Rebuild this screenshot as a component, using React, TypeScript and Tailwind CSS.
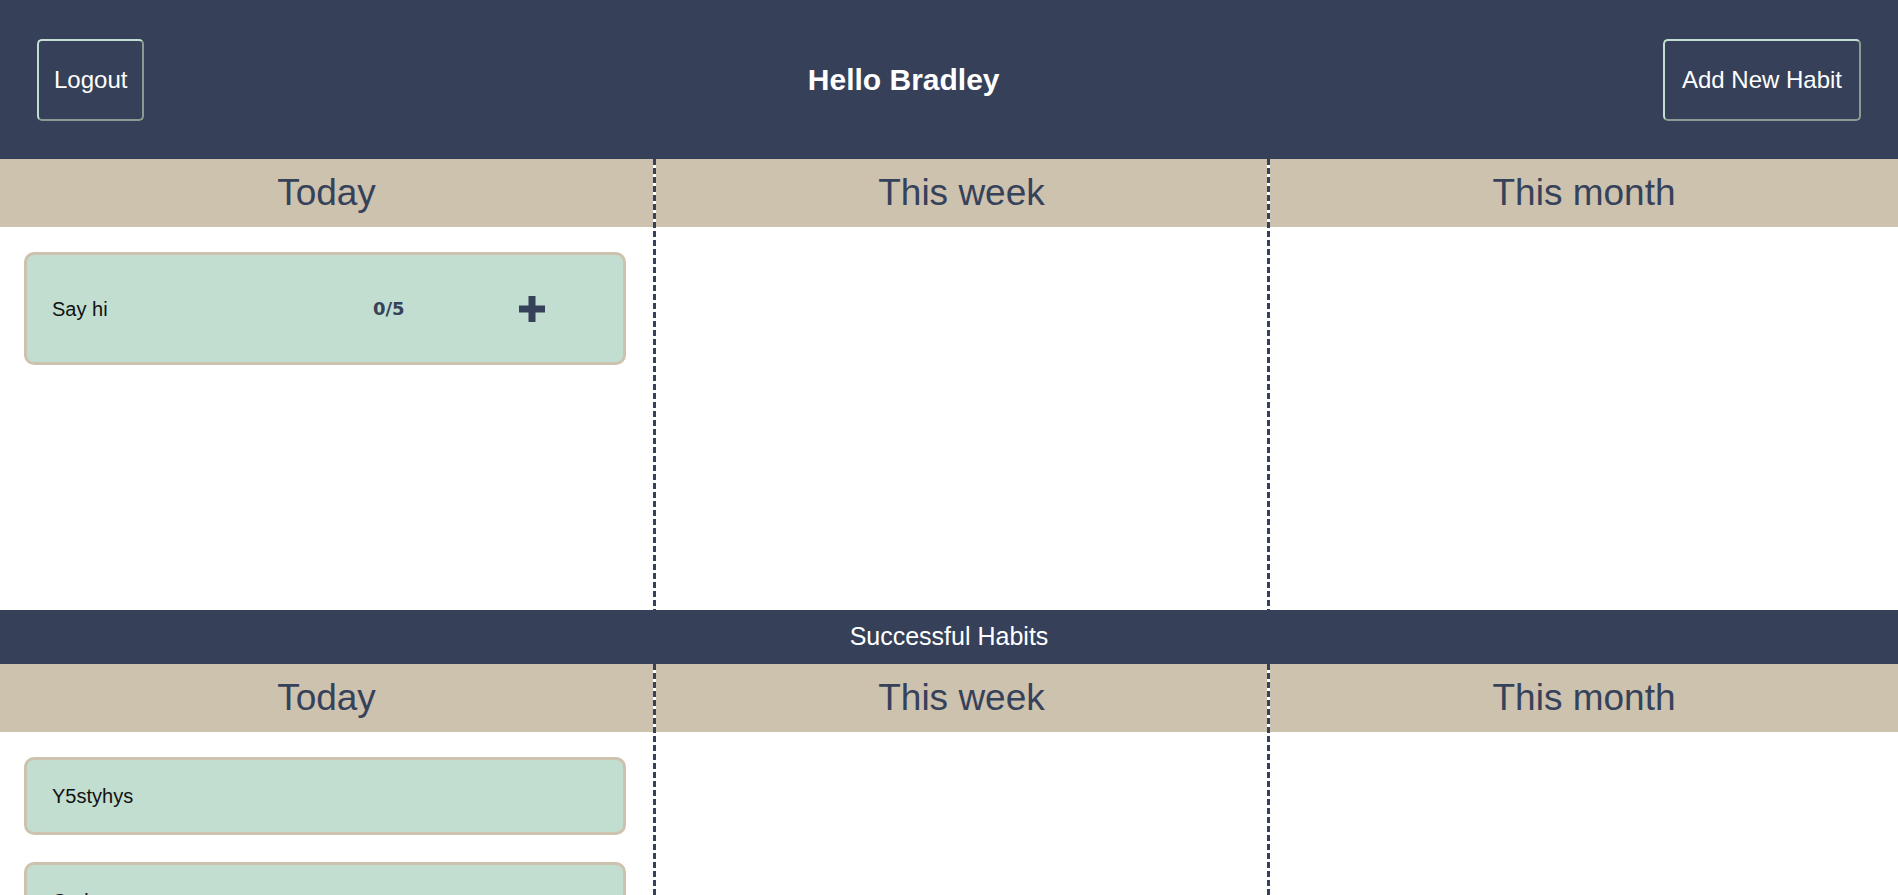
import React from 'react';

type Habit = { id: number; name: string; progress?: string };

const pending: Habit[] = [{ id: 1, name: 'Say hi', progress: '0/5' }];
const done: Habit[] = [
  { id: 2, name: 'Y5styhys' },
  { id: 3, name: 'Code' },
];

const periods = ['Today', 'This week', 'This month'];

function PlusIcon() {
  return (
    <svg width="26" height="26" viewBox="0 0 26 26" className="block">
      <rect x="0" y="9.5" width="26" height="7" fill="#36415a" />
      <rect x="9.5" y="0" width="7" height="26" fill="#36415a" />
    </svg>
  );
}

function HabitCard({ habit }: { habit: Habit }) {
  if (habit.progress) {
    return (
      <div className="h-[113px] flex items-center pl-[25px] bg-[#c2ded1] border-[3px] border-[#cdc2ae] rounded-[10px]">
        <span className="w-[321px] text-[20px] text-[#111]">{habit.name}</span>
        <span className="w-[32px] text-[18px] font-bold text-[#36415a] font-['DejaVu_Sans',sans-serif]">
          {habit.progress}
        </span>
        <button className="ml-[114px]">
          <PlusIcon />
        </button>
      </div>
    );
  }
  return (
    <div className="h-[78px] flex items-center pl-[25px] bg-[#c2ded1] border-[3px] border-[#cdc2ae] rounded-[10px]">
      <span className="text-[20px] text-[#111]">{habit.name}</span>
    </div>
  );
}

function Divider() {
  return (
    <div className="w-[3px] self-stretch bg-white bg-[repeating-linear-gradient(to_bottom,#36415a_0px,#36415a_6px,transparent_6px,transparent_9px)]" />
  );
}

function Band({ label }: { label: string }) {
  return (
    <div className="h-[68px] bg-[#cdc2ae] flex items-center justify-center text-[37px] text-[#36415a]">
      {label}
    </div>
  );
}

function Board({ habits }: { habits: Habit[] }) {
  return (
    <div className="flex">
      <div className="w-[653px] bg-white">
        <Band label={periods[0]} />
        <div className="min-h-[383px] pt-[25px] pl-[24px] pr-[27px] flex flex-col gap-[27px]">
          {habits.map((h) => (
            <HabitCard key={h.id} habit={h} />
          ))}
        </div>
      </div>
      <Divider />
      <div className="w-[611px] bg-white">
        <Band label={periods[1]} />
        <div className="min-h-[383px]" />
      </div>
      <Divider />
      <div className="flex-1 bg-white">
        <Band label={periods[2]} />
        <div className="min-h-[383px]" />
      </div>
    </div>
  );
}

export default function App() {
  return (
    <div className="h-[895px] overflow-hidden bg-white font-['Liberation_Sans',Arial,sans-serif]">
      {/* Header */}
      <header className="h-[159px] bg-[#364159] flex items-center justify-between px-[37px]">
        <button className="h-[82px] px-[15px] text-[24px] text-white border-2 border-t-[#c2ded1] border-l-[#c2ded1] border-r-[#8a9b92] border-b-[#8a9b92] rounded-[5px]">
          Logout
        </button>
        <h1 className="text-[30px] font-bold text-white">Hello Bradley</h1>
        <button className="h-[82px] px-[17px] text-[24px] text-white border-2 border-t-[#c2ded1] border-l-[#c2ded1] border-r-[#8a9b92] border-b-[#8a9b92] rounded-[5px]">
          Add New Habit
        </button>
      </header>

      <Board habits={pending} />

      <div className="h-[54px] bg-[#364159] flex items-center justify-center text-[25px] text-white">
        Successful Habits
      </div>

      <Board habits={done} />
    </div>
  );
}
